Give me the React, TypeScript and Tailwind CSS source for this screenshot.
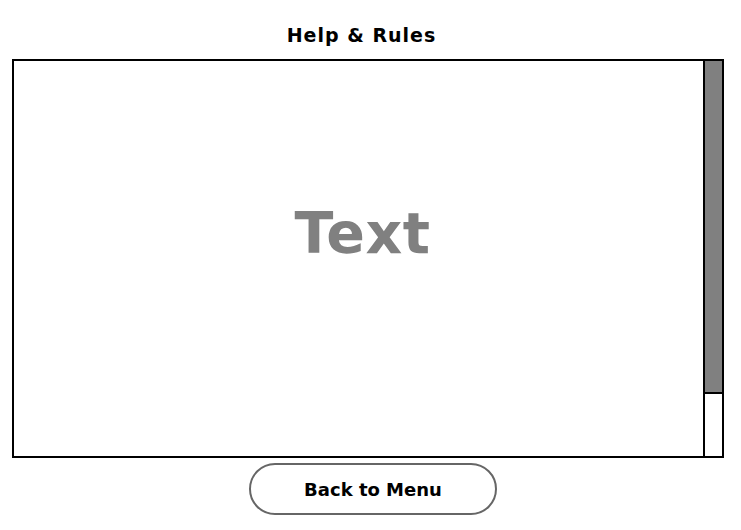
export default function App() {
  return (
    <div className="w-[741px] h-[530px] bg-white flex flex-col" style={{ fontFamily: '"DejaVu Sans", Verdana, sans-serif' }}>
      <div className="h-[59px] flex items-center justify-center pt-[11px]">
        <h1 className="text-[19px] font-bold text-black ml-[-18px] tracking-[1px]">Help &amp; Rules</h1>
      </div>
      <div className="ml-[12px] w-[712px] h-[399px] border-2 border-black flex">
        <div className="flex-1 flex items-center justify-center">
          <span className="text-[57px] font-bold text-[#808080] tracking-[0.5px] mt-[-49px] ml-[8px]">Text</span>
        </div>
        <div className="w-[19px] border-l-2 border-black flex flex-col">
          <div className="h-[333px] bg-[#808080] border-b-2 border-black"></div>
          <div className="flex-1 bg-white"></div>
        </div>
      </div>
      <div className="flex justify-center mt-[5px]">
        <button className="ml-[5px] w-[248px] h-[52px] rounded-full border-2 border-[#666666] bg-white text-[18px] font-bold text-black">Back to Menu</button>
      </div>
    </div>
  );
}
